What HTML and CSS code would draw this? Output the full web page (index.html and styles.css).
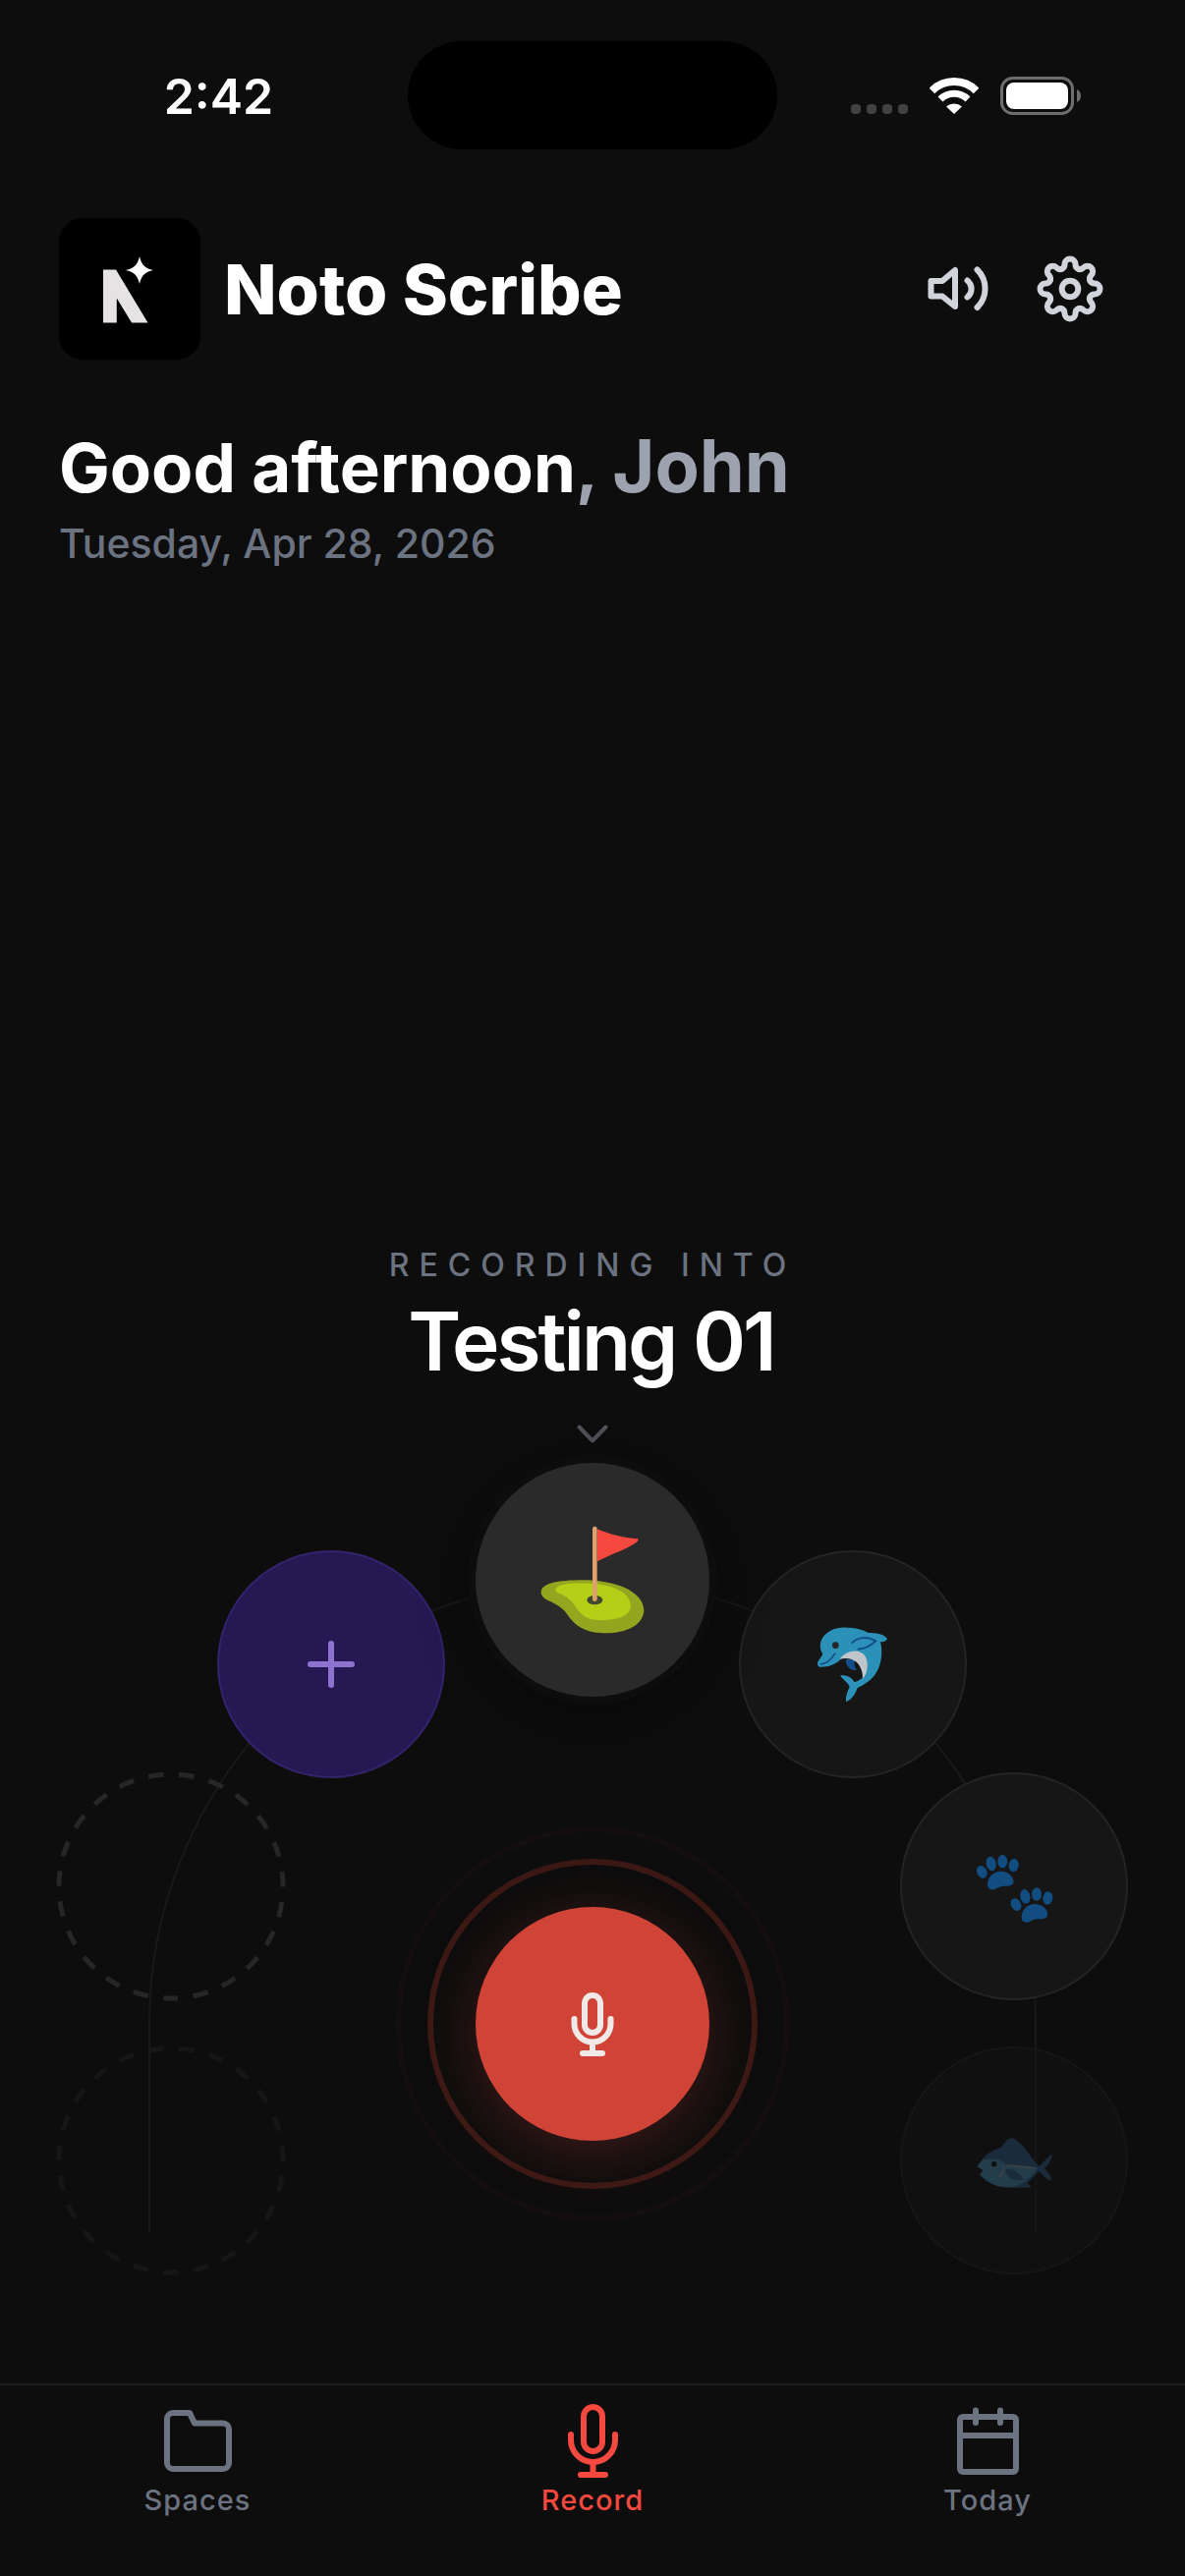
FILE: index.html
```
<!DOCTYPE html>
<html lang="en">
<head>
<meta charset="utf-8">
<meta name="viewport" content="width=device-width, initial-scale=1">
<title>Noto Scribe</title>
<link rel="stylesheet" href="styles.css">
</head>
<body>
<div class="statusbar">
  <time class="clock">2:42</time>
  <div class="island"></div>
  <div class="signals">
    <span class="dots"><i></i><i></i><i></i><i></i></span>
    <svg class="wifi" viewBox="0 0 50 37" aria-hidden="true">
      <path d="M2.400 13.400A32 32 0 0 1 47.600 13.400" fill="none" stroke="#fff" stroke-width="8"/>
      <path d="M11 22A20 20 0 0 1 39 22" fill="none" stroke="#fff" stroke-width="7"/>
      <path d="M25 37L17 29.500A12 12 0 0 1 33 29.500Z" fill="#fff"/>
    </svg>
    <svg class="battery" viewBox="0 0 82 39" aria-hidden="true">
      <rect x="1.500" y="1.500" width="72" height="36" rx="11" fill="none" stroke="#6d6d70" stroke-width="3"/>
      <rect x="6" y="6" width="63" height="27" rx="8" fill="#fff"/>
      <path d="M78 13q4 2 4 6.500t-4 6.500z" fill="#6d6d70"/>
    </svg>
  </div>
</div>

<header class="appbar">
  <svg class="logo" viewBox="0 0 144 144" aria-hidden="true">
    <path d="M45 52.500H58L90.500 106.500H74L58.800 81.500V106.500H45Z" fill="#e5e3e4"/>
    <path d="M82 39C84 47.500 87.500 51 96 53C87.500 55 84 58.500 82 67C80 58.500 76.500 55 68 53C76.500 51 80 47.500 82 39Z" fill="#fff"/>
  </svg>
  <h1 class="brand">Noto Scribe</h1>
  <div class="actions">
    <button class="icon-button" type="button" aria-label="Sound">
      <svg class="line-icon" viewBox="0 0 72 72">
        <path d="M8.500 28H20L33 17V54L20 43.500H8.500Z"/>
        <path d="M45.500 27.500A10.800 10.800 0 0 1 45.500 44.500M55.500 16.500A27 27 0 0 1 55.500 55"/>
      </svg>
    </button>
    <button class="icon-button" type="button" aria-label="Settings">
      <svg class="line-icon" viewBox="-36 -36 72 72">
        <defs><path id="tooth" d="M-8.400 -20.300C-6.500 -21.100 -5.500 -22.500 -5.500 -25A5.500 5.500 0 0 1 5.500 -25C5.500 -22.500 6.500 -21.100 8.400 -20.300"/></defs>
        <use href="#tooth"/>
        <use href="#tooth" transform="rotate(45)"/>
        <use href="#tooth" transform="rotate(90)"/>
        <use href="#tooth" transform="rotate(135)"/>
        <use href="#tooth" transform="rotate(180)"/>
        <use href="#tooth" transform="rotate(225)"/>
        <use href="#tooth" transform="rotate(270)"/>
        <use href="#tooth" transform="rotate(315)"/>
        <circle r="8.300"/>
      </svg>
    </button>
  </div>
</header>

<main class="home">
  <section class="greeting">
    <h2 class="hello">Good afternoon<span class="hello-name">, <b>John</b></span></h2>
    <p class="date">Tuesday, Apr 28, 2026</p>
  </section>

  <section class="recorder">
    <p class="eyebrow">RECORDING INTO</p>
    <h2 class="space-name">Testing 01</h2>
    <svg class="chevron" viewBox="0 0 36 24" aria-hidden="true"><path d="M4.500 4.500L18 18.500L31.500 4.500"/></svg>

    <div class="dial">
      <svg class="track" viewBox="0 0 904 668" aria-hidden="true">
        <path d="M1 665V452A451 451 0 0 1 903 452V665"/>
      </svg>

      <button class="slot slot-empty slot-left-low" type="button" aria-label="Empty slot">
        <svg viewBox="-117 -117 234 234"><circle r="114" transform="rotate(90)"/></svg>
      </button>
      <button class="slot slot-empty slot-left-mid" type="button" aria-label="Empty slot">
        <svg viewBox="-117 -117 234 234"><circle r="114" transform="rotate(90)"/></svg>
      </button>
      <button class="slot slot-add" type="button" aria-label="Add space">
        <svg class="plus" viewBox="0 0 52 52"><path d="M26 5V47M5 26H47"/></svg>
      </button>
      <button class="slot slot-space slot-right-top" type="button" aria-label="Dolphin space">
        <svg class="emoji" viewBox="-4 0 300 300">
          <path d="M125 134C122 152 134 168 158 169C150 158 150 148 152 136Z" fill="#124f8a"/>
          <path d="M38 148C38 140 50 130 54 118C46 108 44 90 50 76C64 46 98 36 126 38C154 38 176 44 194 54C212 54 240 56 251 72C248 80 238 82 230 82C238 112 234 156 212 184C198 202 178 214 160 222C154 240 144 256 126 265C122 250 130 232 136 220C132 206 116 198 107 184C126 182 144 190 150 204C176 200 196 172 188 144C176 110 134 106 112 132C94 150 70 160 44 158C40 156 38 152 38 148Z" fill="#2c91b8"/>
          <path d="M106 134C128 104 170 102 184 126C194 144 194 174 176 194C176 164 164 142 140 134C128 130 116 132 106 134Z" fill="#bfc5c8"/>
          <path d="M46 150C62 150 80 136 92 116" fill="none" stroke="#124f8a" stroke-width="5"/>
          <path d="M142 86C158 68 190 62 216 79C202 92 184 104 160 104" fill="none" stroke="#124f8a" stroke-width="6" stroke-linejoin="round"/>
          <circle cx="93" cy="92" r="10" fill="#26282a"/>
        </svg>
      </button>
      <button class="slot slot-space slot-right-mid" type="button" aria-label="Paws space">
        <svg class="emoji" viewBox="1 -9 300 300">
          <g fill="#124d82">
            <g id="paw">
              <ellipse cx="53" cy="97" rx="15" ry="20" transform="rotate(-28 53 97)"/>
              <ellipse cx="81" cy="72" rx="15" ry="22" transform="rotate(-12 81 72)"/>
              <ellipse cx="116" cy="65" rx="15" ry="20"/>
              <ellipse cx="150" cy="77" rx="15" ry="20" transform="rotate(8 150 77)"/>
              <path d="M70 136C70 112 90 94 112 95C136 96 152 114 149 130C146 142 130 140 116 141C100 142 96 152 84 151C74 150 70 144 70 136Z"/>
            </g>
            <use href="#paw" transform="translate(104 100)"/>
          </g>
        </svg>
      </button>
      <button class="slot slot-space slot-right-low" type="button" aria-label="Fish space">
        <svg class="emoji" viewBox="1 -15 300 300">
          <path d="M38 154C50 140 58 122 78 110C92 102 108 100 114 92C122 80 132 68 144 66C162 70 192 104 206 128L228 154C240 142 254 122 268 116C266 134 256 148 244 160C256 172 266 184 266 198C252 194 238 180 228 168C216 178 204 192 192 204L204 218H140C104 220 66 204 46 176L58 166Z" fill="#1a2b3c"/>
          <path d="M38 154L54 134C90 126 120 134 126 150L224 158C204 184 184 208 150 214C108 222 66 204 46 176L58 166Z" fill="#243d4b"/>
          <path d="M124 164C144 156 168 170 180 194C158 198 132 194 124 164Z" fill="#1a2b3c"/>
          <path d="M104 186C116 178 120 168 120 152M128 150L216 158" fill="none" stroke="#3b4147" stroke-width="6"/>
          <circle cx="90" cy="146" r="8" fill="#0d0f12"/>
        </svg>
      </button>
      <button class="slot slot-active" type="button" aria-label="Testing 01">
        <svg class="emoji emoji-large" viewBox="-6 12 450 450">
          <path d="M62 274C64 248 110 238 190 238C280 238 374 268 376 330C374 376 320 402 250 400C196 398 166 378 144 346C130 324 114 316 92 304C72 296 62 288 62 274Z" fill="#94a51f"/>
          <path d="M106 266C112 250 150 246 210 248C280 250 336 276 336 318C334 346 296 362 238 360C208 360 184 346 168 320C150 292 130 284 112 276C108 273 105 270 106 266Z" fill="#b5cf18"/>
          <ellipse cx="226" cy="299" rx="24" ry="14" fill="#3f4a2c"/>
          <path d="M226 81V296" stroke="#dfa06f" stroke-width="14" stroke-linecap="round"/>
          <path d="M234 82C270 98 310 108 359 112C358 122 350 126 340 131C302 152 266 162 234 181Z" fill="#f5483f"/>
        </svg>
      </button>

      <div class="pulse pulse-outer"></div>
      <div class="pulse pulse-inner"></div>
      <button class="record" type="button" aria-label="Start recording">
        <svg class="record-icon" viewBox="0 0 72 72">
          <rect x="28" y="7" width="16" height="38" rx="8"/>
          <path d="M17.500 31V36A18.500 18.500 0 0 0 54.500 36V31M36 54.500V66M26 66H46"/>
        </svg>
      </button>
    </div>
  </section>
</main>

<nav class="tabs">
  <a class="tab" href="#spaces">
    <svg class="tab-icon" viewBox="-4 -4 80 80"><path d="M11 7H28L33 17.500H62A6 6 0 0 1 68 23.500V58A6 6 0 0 1 62 64H11A6 6 0 0 1 5 58V13A6 6 0 0 1 11 7Z"/></svg>
    Spaces
  </a>
  <a class="tab tab-current" href="#record" aria-current="page">
    <svg class="tab-icon" viewBox="-4 -4 80 80"><rect x="27" y="1" width="19" height="45" rx="9.500"/><path d="M14 29V34.500A22.500 22.500 0 0 0 59 34.500V29M36.500 57V70M24 70H49"/></svg>
    Record
  </a>
  <a class="tab" href="#today">
    <svg class="tab-icon" viewBox="-4 -4 80 80"><rect x="8" y="11" width="57" height="56" rx="3"/><path d="M8 30H65M24 4.500V17M49 4.500V17"/></svg>
    Today
  </a>
</nav>
</body>
</html>
```
FILE: styles.css
```
* {
  box-sizing: border-box;
}

body {
  margin: 0;
  min-height: 100vh;
  display: flex;
  flex-direction: column;
  background: #0d0d0d;
  color: #fff;
  font-family: Inter, "Liberation Sans", sans-serif;
}

h1, h2, p {
  margin: 0;
}

button {
  padding: 0;
  border: 0;
  background: none;
  color: inherit;
  font: inherit;
}

svg {
  display: block;
  flex: none;
}

/* Status bar */

.statusbar {
  display: grid;
  grid-template-columns: 1fr 376px 1fr;
  align-items: center;
  padding-top: 42px;
}

.clock {
  padding: 2px 0 0 30px;
  text-align: center;
  font-size: 50px;
  line-height: 60px;
  font-weight: 600;
}

.island {
  height: 110px;
  border-radius: 55px;
  background: #000;
}

.signals {
  display: flex;
  align-items: center;
  justify-content: flex-end;
  gap: 22px;
  padding-right: 106px;
}

.dots {
  display: flex;
  gap: 6px;
  padding-top: 28px;
}

.dots i {
  width: 10px;
  height: 10px;
  border-radius: 4px;
  background: #414142;
}

.wifi {
  width: 50px;
  height: 37px;
}

.battery {
  width: 82px;
  height: 39px;
}

/* App bar */

.appbar {
  display: flex;
  align-items: center;
  margin-top: 70px;
  padding: 0 81px 0 60px;
}

.logo {
  width: 144px;
  height: 144px;
  border-radius: 24px;
  background: #000;
}

.brand {
  padding-top: 2px;
  margin-left: 24px;
  font-size: 70px;
  line-height: 84px;
  font-weight: 800;
}

.actions {
  display: flex;
  gap: 42px;
  margin-left: auto;
}

.line-icon {
  width: 72px;
  height: 72px;
  fill: none;
  stroke: #d1d5db;
  stroke-width: 6;
  stroke-linecap: round;
  stroke-linejoin: round;
}

/* Greeting */

.home {
  flex: 1;
  display: flex;
  flex-direction: column;
}

.greeting {
  padding: 64px 60px 0;
}

.hello {
  font-size: 69px;
  line-height: 88px;
  font-weight: 700;
}

.hello-name {
  color: #9ca3af;
}

.hello-name b {
  font-size: 74px;
  line-height: 88px;
  font-weight: 700;
}

.date {
  margin-top: 3px;
  color: #6b7280;
  font-size: 41px;
  line-height: 60px;
  font-weight: 500;
}

/* Recorder */

.recorder {
  display: flex;
  flex-direction: column;
  align-items: center;
  margin-top: auto;
}

.eyebrow {
  margin-bottom: 8px;
  color: #6b7280;
  font-size: 32px;
  line-height: 40px;
  font-weight: 500;
  letter-spacing: 10px;
}

.space-name {
  padding-right: 3px;
  font-size: 82px;
  line-height: 100px;
  font-weight: 600;
  letter-spacing: -3px;
}

.chevron {
  width: 36px;
  height: 24px;
  margin-top: 32px;
  fill: none;
  stroke: #52525b;
  stroke-width: 4;
  stroke-linecap: round;
  stroke-linejoin: round;
}

/* The dial is a free canvas: every disc is placed by its centre. */

.dial {
  position: relative;
  width: 100%;
  height: 954px;
}

.track {
  position: absolute;
  left: calc(50% - 452px);
  top: 136px;
  width: 904px;
  height: 668px;
  fill: none;
  stroke: #191919;
  stroke-width: 2;
}

.slot,
.pulse,
.record {
  position: absolute;
  left: 50%;
  top: 0;
  display: flex;
  align-items: center;
  justify-content: center;
  border-radius: 50%;
  transform: translate(-50%, -50%);
}

.slot {
  width: 232px;
  height: 232px;
}

.slot-active {
  top: 136px;
  width: 238px;
  height: 238px;
  background: #2a2a2a;
  box-shadow: 0 0 0 8px #0d0d0d, 0 12px 48px 4px #090909;
}

.slot-add {
  left: calc(50% - 266px);
  top: 222px;
  border: 2px solid #33246b;
  background: #261953;
}

.slot-space {
  border: 2px solid #242424;
  background: #161616;
}

.slot-right-top {
  left: calc(50% + 265px);
  top: 222px;
}

.slot-right-mid {
  left: calc(50% + 429px);
  top: 448px;
}

.slot-right-low {
  left: calc(50% + 429px);
  top: 727px;
  border-color: #161616;
  background: rgba(18, 18, 18, 0.600);
}

.slot-left-mid {
  left: calc(50% - 429px);
  top: 448px;
  stroke: #262626;
}

.slot-left-low {
  left: calc(50% - 429px);
  top: 727px;
  stroke: #161616;
}

.slot-empty svg {
  width: 234px;
  height: 234px;
  fill: none;
  stroke-width: 5;
  stroke-dasharray: 15.600 15.540;
  stroke-dashoffset: 7.800;
}

.plus {
  width: 52px;
  height: 52px;
  fill: none;
  stroke: #8d72cf;
  stroke-width: 6;
  stroke-linecap: round;
}

.emoji {
  width: 100px;
  height: 100px;
}

.emoji-large {
  width: 150px;
  height: 150px;
}

.pulse {
  top: 588px;
}

.pulse-outer {
  width: 402px;
  height: 402px;
  border: 6px solid #140e0e;
}

.pulse-inner {
  width: 336px;
  height: 336px;
  border: 6px solid #3c1916;
}

.record {
  top: 588px;
  width: 238px;
  height: 238px;
  background: #d04437;
  box-shadow: 0 12px 60px rgba(208, 68, 55, 0.250);
}

.record-icon {
  width: 72px;
  height: 72px;
  fill: none;
  stroke: #f1e9e8;
  stroke-width: 6;
  stroke-linecap: round;
  stroke-linejoin: round;
}

/* Tab bar */

.tabs {
  display: grid;
  grid-template-columns: repeat(3, 1fr);
  padding: 17px 0 57px;
  border-top: 2px solid #1a1e21;
}

.tab {
  display: flex;
  flex-direction: column;
  align-items: center;
  color: #6b7280;
  font-size: 29px;
  line-height: 40px;
  font-weight: 500;
  letter-spacing: 1px;
  text-decoration: none;
}

.tab-current {
  color: #f5483f;
}

.tab-icon {
  width: 80px;
  height: 80px;
  fill: none;
  stroke: currentColor;
  stroke-width: 6;
  stroke-linecap: round;
  stroke-linejoin: round;
}
```
